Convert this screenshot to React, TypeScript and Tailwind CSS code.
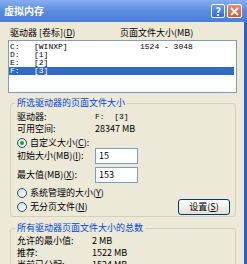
const font = { fontFamily: '"Noto Sans CJK SC", "Liberation Sans", sans-serif' };
const mono = { fontFamily: '"Liberation Mono", "DejaVu Sans Mono", monospace' };

function Radio({ checked }: { checked?: boolean }) {
  return (
    <span className="flex h-[10px] w-[10px] shrink-0 items-center justify-center rounded-full border border-[#1c5180] bg-linear-to-br from-[#dcdcd4] to-white">
      {checked && <span className="h-[4px] w-[4px] rounded-full bg-[#21a121]" />}
    </span>
  );
}

function Key({ k }: { k: string }) {
  return (
    <>
      (<span className="underline">{k}</span>)
    </>
  );
}

const drives = [
  { d: "C:", label: "[WINXP]", size: "1524 - 3048" },
  { d: "D:", label: "[1]", size: "" },
  { d: "E:", label: "[2]", size: "" },
  { d: "F:", label: "[3]", size: "", selected: true },
];

export default function App() {
  return (
    <div
      className="flex h-[264px] w-[247px] flex-col overflow-hidden bg-[#ece9d8] text-[9px] leading-[10px] text-black"
      style={font}
    >
      {/* title bar */}
      <div className="flex h-[22px] shrink-0 items-center justify-between bg-linear-to-b from-[#86aef0] via-[#5b8ce0] to-[#4a7ed8] pl-[4px] pr-[5px]">
        <span className="text-[10px] font-semibold text-white">虚拟内存</span>
        <div className="flex gap-[2px]">
          <span className="flex h-[14px] w-[14px] items-center justify-center rounded-[2px] border border-white bg-linear-to-b from-[#6a9cee] to-[#3268d8] text-[11px] font-bold text-white">
            ?
          </span>
          <span className="flex h-[14px] w-[15px] items-center justify-center rounded-[2px] border border-white bg-linear-to-b from-[#ec8a74] to-[#d2563c]">
            <svg width="9" height="9" viewBox="0 0 9 9">
              <path d="M1 1L8 8M8 1L1 8" stroke="white" strokeWidth="2" />
            </svg>
          </span>
        </div>
      </div>

      <div className="flex flex-1">
        <div className="w-[244px] flex-col">
          {/* header */}
          <div className="ml-[10px] mt-[6px] flex h-[10px]">
            <span className="w-[110px]">
              驱动器 [卷标]<Key k="D" />
            </span>
            <span>页面文件大小(MB)</span>
          </div>

          {/* list */}
          <div
            className="ml-[8px] mt-[2px] h-[53px] w-[229px] border border-[#7f9db9] bg-white pt-[2px] text-[8px] leading-[8px]"
            style={mono}
          >
            {drives.map((r) => (
              <div
                key={r.d}
                className={`flex h-[8px] items-center pl-[1px] ${r.selected ? "mr-[2px] bg-[#316ac5] text-white" : ""}`}
              >
                <span className="w-[24px]">{r.d}</span>
                <span className="w-[106px]">{r.label}</span>
                <span>{r.size}</span>
              </div>
            ))}
          </div>

          {/* group 1 */}
          <fieldset className="ml-[10px] mt-[5px] w-[226px] rounded-[3px] border border-[#d0d0bf] pb-[1px] pl-[6px] pr-[5px]">
            <legend className="ml-[-2px] px-[2px] text-[#0046d5]">所选驱动器的页面文件大小</legend>
            <div className="grid grid-cols-[78px_1fr] pt-[4px]">
              <span className="h-[10px]">驱动器:</span>
              <span style={mono} className="text-[8px]">F:&nbsp;&nbsp;[3]</span>
              <span className="mt-[2px] h-[10px]">可用空间:</span>
              <span className="mt-[2px]">28347 MB</span>
            </div>
            <div className="mt-[4px] flex h-[10px] items-center gap-[3px]">
              <Radio checked />
              <span>
                自定义大小<Key k="C" />:
              </span>
            </div>
            <div className="flex h-[16px] items-center">
              <span className="w-[78px]">
                初始大小(MB)<Key k="I" />:
              </span>
              <span className="flex h-[16px] w-[43px] items-center border border-[#7f9db9] bg-white pl-[3px]">15</span>
            </div>
            <div className="mt-[3px] flex h-[16px] items-center">
              <span className="w-[78px]">
                最大值(MB)<Key k="X" />:
              </span>
              <span className="flex h-[16px] w-[43px] items-center border border-[#7f9db9] bg-white pl-[3px]">153</span>
            </div>
            <div className="mt-[5px] flex h-[10px] items-center gap-[3px]">
              <Radio />
              <span>
                系统管理的大小<Key k="Y" />
              </span>
            </div>
            <div className="mt-[1px] flex h-[16px] items-center justify-between">
              <div className="flex items-center gap-[3px]">
                <Radio />
                <span>
                  无分页文件<Key k="N" />
                </span>
              </div>
              <span className="flex h-[16px] w-[52px] items-center justify-center rounded-[3px] border border-[#003c74] bg-linear-to-b from-white to-[#e3e1d4]">
                设置<Key k="S" />
              </span>
            </div>
          </fieldset>

          {/* group 2 */}
          <fieldset className="ml-[10px] mt-[6px] w-[226px] rounded-[3px] border border-[#d0d0bf] pl-[6px] pr-[5px]">
            <legend className="ml-[-2px] px-[2px] text-[#0046d5]">所有驱动器页面文件大小的总数</legend>
            <div className="grid grid-cols-[75px_1fr] pt-[3px]">
              <span className="h-[10px]">允许的最小值:</span>
              <span>2 MB</span>
              <span className="mt-[2px] h-[10px]">推荐:</span>
              <span className="mt-[2px]">1522 MB</span>
              <span className="mt-[2px] h-[10px]">当前已分配:</span>
              <span className="mt-[2px]">1524 MB</span>
            </div>
          </fieldset>
        </div>
        <div className="w-[3px] bg-[#2c5fd0]" />
      </div>
    </div>
  );
}
